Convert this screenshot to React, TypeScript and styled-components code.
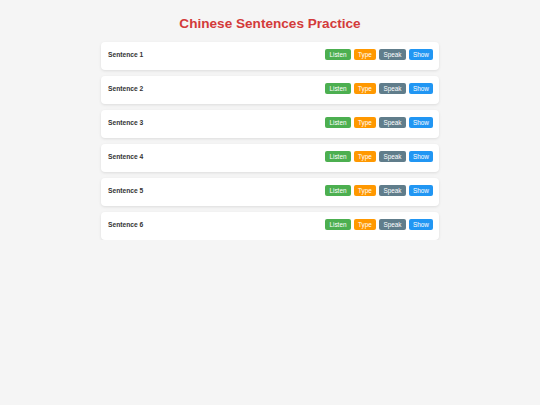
import React from "react";
import styled, { createGlobalStyle } from "styled-components";

const GlobalStyle = createGlobalStyle`
  body {
    margin: 0;
    background-color: #f5f5f5;
    font-family: "Liberation Sans", Arial, sans-serif;
  }
`;

const sentences = [1, 2, 3, 4, 5, 6];

const actions = [
  { label: "Listen", color: "#4caf50" },
  { label: "Type", color: "#ff9800" },
  { label: "Speak", color: "#607d8b" },
  { label: "Show", color: "#2196f3" }
];

function App() {
  return (
    <>
      <GlobalStyle />
      <Page>
        <Title>Chinese Sentences Practice</Title>
        <List>
          {sentences.map((n) => (
            <Card key={n}>
              <Label>Sentence {n}</Label>
              <Actions>
                {actions.map((a) => (
                  <ActionButton key={a.label} $color={a.color}>
                    {a.label}
                  </ActionButton>
                ))}
              </Actions>
            </Card>
          ))}
        </List>
      </Page>
    </>
  );
}

export default App;

const Page = styled.div`
  width: 338px;
  margin: 0 auto;
  padding-top: 15px;
`;

const Title = styled.h1`
  margin: 0 0 10px;
  text-align: center;
  font-size: 13.6px;
  line-height: 17px;
  font-weight: 700;
  color: #d33a3a;
`;

const List = styled.div`
  display: flex;
  flex-direction: column;
  gap: 6px;
`;

const Card = styled.div`
  display: flex;
  align-items: center;
  justify-content: space-between;
  box-sizing: border-box;
  height: 28px;
  padding: 0 6px 4px 7px;
  background-color: white;
  border-radius: 4px;
  box-shadow: 0 1px 3px rgba(0, 0, 0, 0.1);
`;

const Label = styled.span`
  font-size: 6.7px;
  font-weight: 700;
  color: #333;
`;

const Actions = styled.div`
  display: flex;
  gap: 3.5px;
`;

const ActionButton = styled.button<{ $color: string }>`
  height: 11px;
  padding: 0 4px;
  border: none;
  border-radius: 2px;
  background-color: ${(p) => p.$color};
  color: white;
  font-family: "Liberation Sans", Arial, sans-serif;
  font-size: 6.4px;
  line-height: 11px;
`;
